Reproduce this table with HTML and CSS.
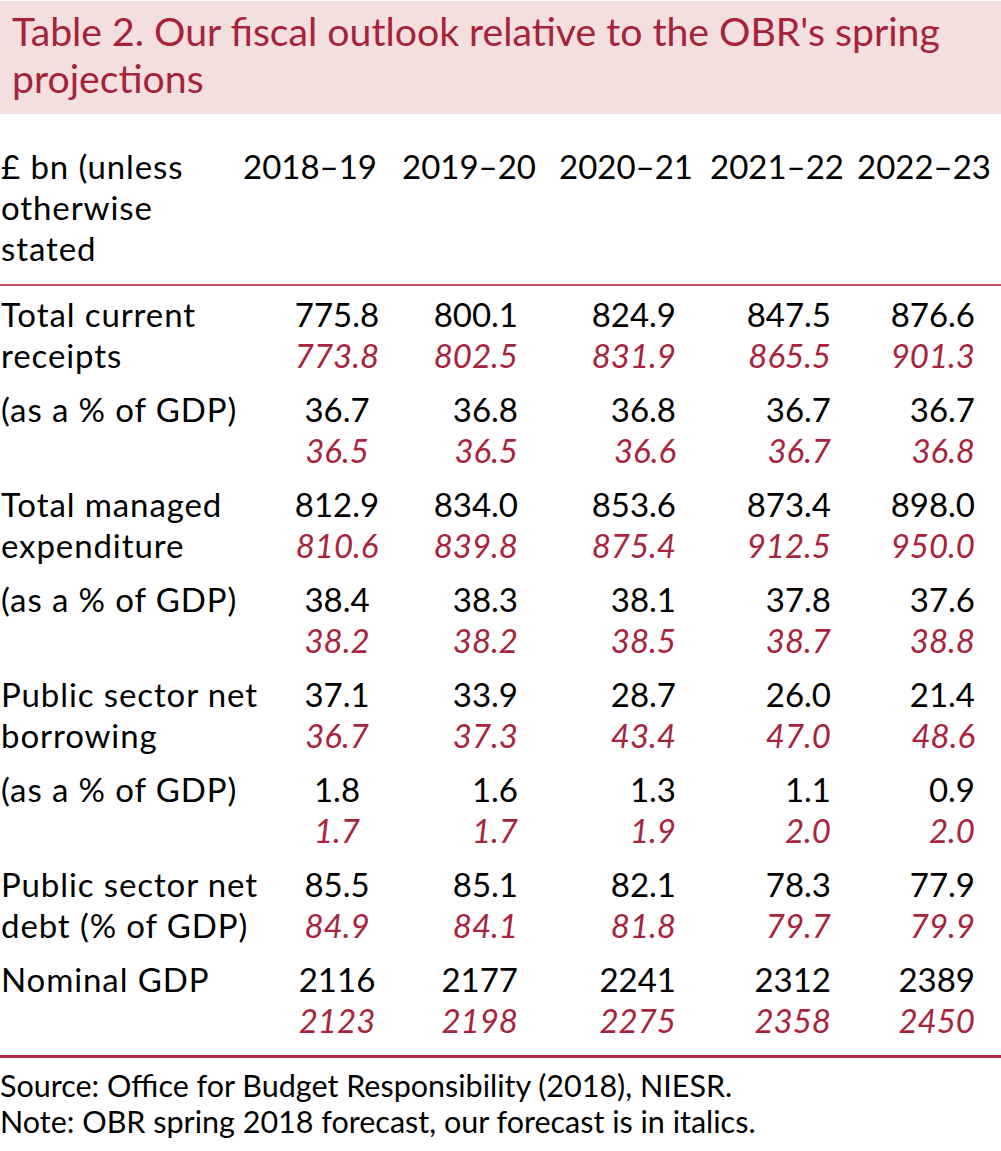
FILE: index.html
```html
<!DOCTYPE html>
<html lang="en">
<head>
<meta charset="utf-8">
<title>Table 2</title>
<link rel="stylesheet" href="styles.css">
</head>
<body>
<div class="title-band">
  <h1 class="title">Table 2. Our fiscal outlook relative to the OBR's spring<br>projections</h1>
</div>
<table class="fiscal">
  <colgroup>
    <col class="c-label"><col class="c1"><col class="c2"><col class="c3"><col class="c4"><col class="c5">
  </colgroup>
  <thead>
    <tr>
      <th class="label">£ bn (unless<br>otherwise<br>stated</th>
      <th>2018–19</th><th>2019–20</th><th>2020–21</th><th>2021–22</th><th>2022–23</th>
    </tr>
  </thead>
  <tbody>
    <tr>
      <td class="label">Total current<br>receipts</td>
      <td>775.8<br><i>773.8</i></td><td>800.1<br><i>802.5</i></td><td>824.9<br><i>831.9</i></td><td>847.5<br><i>865.5</i></td><td>876.6<br><i>901.3</i></td>
    </tr>
    <tr>
      <td class="label">(as a % of GDP)</td>
      <td>36.7<br><i>36.5</i></td><td>36.8<br><i>36.5</i></td><td>36.8<br><i>36.6</i></td><td>36.7<br><i>36.7</i></td><td>36.7<br><i>36.8</i></td>
    </tr>
    <tr>
      <td class="label">Total managed<br>expenditure</td>
      <td>812.9<br><i>810.6</i></td><td>834.0<br><i>839.8</i></td><td>853.6<br><i>875.4</i></td><td>873.4<br><i>912.5</i></td><td>898.0<br><i>950.0</i></td>
    </tr>
    <tr>
      <td class="label">(as a % of GDP)</td>
      <td>38.4<br><i>38.2</i></td><td>38.3<br><i>38.2</i></td><td>38.1<br><i>38.5</i></td><td>37.8<br><i>38.7</i></td><td>37.6<br><i>38.8</i></td>
    </tr>
    <tr>
      <td class="label">Public sector net<br>borrowing</td>
      <td>37.1<br><i>36.7</i></td><td>33.9<br><i>37.3</i></td><td>28.7<br><i>43.4</i></td><td>26.0<br><i>47.0</i></td><td>21.4<br><i>48.6</i></td>
    </tr>
    <tr>
      <td class="label">(as a % of GDP)</td>
      <td>1.8<br><i>1.7</i></td><td>1.6<br><i>1.7</i></td><td>1.3<br><i>1.9</i></td><td>1.1<br><i>2.0</i></td><td>0.9<br><i>2.0</i></td>
    </tr>
    <tr>
      <td class="label">Public sector net<br>debt (% of GDP)</td>
      <td>85.5<br><i>84.9</i></td><td>85.1<br><i>84.1</i></td><td>82.1<br><i>81.8</i></td><td>78.3<br><i>79.7</i></td><td>77.9<br><i>79.9</i></td>
    </tr>
    <tr class="last">
      <td class="label">Nominal GDP</td>
      <td>2116<br><i>2123</i></td><td>2177<br><i>2198</i></td><td>2241<br><i>2275</i></td><td>2312<br><i>2358</i></td><td>2389<br><i>2450</i></td>
    </tr>
  </tbody>
</table>
<div class="notes">
  <p>Source: Office for Budget Responsibility (2018), NIESR.</p>
  <p>Note: OBR spring 2018 forecast, our forecast is in italics.</p>
</div>
</body>
</html>
```
FILE: styles.css
```css
html, body {
  margin: 0;
  padding: 0;
  background: #ffffff;
}
body {
  font-family: Lato, "Open Sans", sans-serif;
  color: #000;
  width: 1001px;
}
.title-band {
  margin-top: 1px;
  background: #f3dfdd;
  padding: 6px 12px 13px;
}
.title {
  margin: 0;
  font-weight: 400;
  font-size: 39.2px;
  line-height: 47px;
  color: #a6233b;
}
.fiscal {
  width: 1001px;
  border-collapse: collapse;
  table-layout: fixed;
  font-size: 33px;
  line-height: 41px;
}
.c-label { width: 243px; }
.c1 { width: 145px; }
.c2 { width: 143px; }
.c3 { width: 158px; }
.c4 { width: 155px; }
.c5 { width: 157px; }
.fiscal th {
  font-weight: 400;
  text-align: left;
  vertical-align: top;
  white-space: nowrap;
  padding: 32px 0 15px 0;
  border-bottom: 2px solid #c34d63;
}
.fiscal th.label {
  padding-left: 1px;
  letter-spacing: 0.9px;
}
.fiscal th:nth-child(3) { padding-left: 14px; }
.fiscal th:nth-child(4) { padding-left: 28px; }
.fiscal th:nth-child(5) { padding-left: 21px; }
.fiscal th:nth-child(6) { padding-left: 13px; }
.fiscal td {
  vertical-align: top;
  text-align: right;
  white-space: nowrap;
  padding: 8px 13px 5px 0;
}
.fiscal td.label {
  text-align: left;
  padding-left: 1px;
  padding-right: 0;
  letter-spacing: 0.9px;
}
.fiscal td:nth-child(2) {
  text-align: center;
  padding-left: 43px;
  padding-right: 0;
}
.fiscal td:nth-child(6) { padding-right: 26px; }
.fiscal tr.last td {
  padding-bottom: 14px;
  border-bottom: 3px solid #b02a42;
}
.fiscal i {
  color: #a8233d;
}
.notes {
  padding-top: 9px;
  font-size: 30.5px;
  line-height: 36px;
}
.notes p {
  margin: 0;
}
```
